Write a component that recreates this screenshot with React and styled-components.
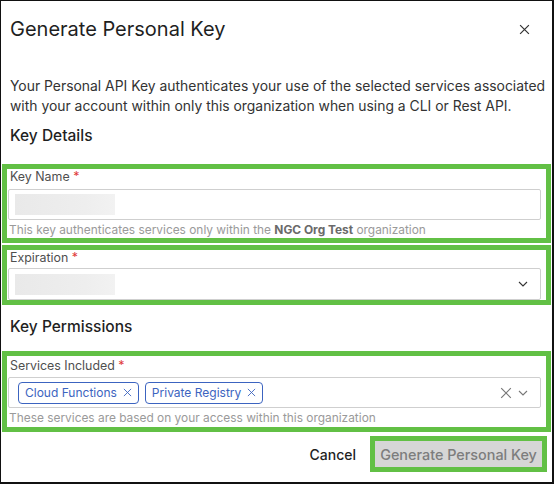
import React from 'react';
import styled, { createGlobalStyle } from 'styled-components';

const GlobalStyle = createGlobalStyle`
  html, body {
    margin: 0;
    padding: 0;
    background: #fff;
  }
  * {
    box-sizing: border-box;
  }
`;

// Styled Components
const Dialog = styled.div`
  width: 554px;
  height: 484px;
  border: 1px solid #111;
  border-right-width: 2px;
  border-bottom-width: 2px;
  background: #fff;
  font-family: Inter, "Noto Sans", sans-serif;
  color: #1a1a1a;
  display: flex;
  flex-direction: column;
`;

const Header = styled.div`
  display: flex;
  justify-content: space-between;
  align-items: center;
  padding: 14px 22px 0 9px;
  height: 42px;
`;

const Title = styled.h2`
  margin: 0;
  font-size: 20px;
  font-weight: 400;
  color: #1f1f1f;
`;

const CloseButton = styled.button`
  border: 0;
  background: none;
  padding: 0;
  display: flex;
  color: #333;
  cursor: pointer;
`;

const Body = styled.div`
  display: flex;
  flex-direction: column;
  padding: 33px 1px 0 1px;
`;

const Description = styled.p`
  margin: 0 0 0 8px;
  font-size: 13.9px;
  line-height: 20px;
  color: #333;
`;

const SectionTitle = styled.h3`
  margin: ${p => p.$top || 9}px 0 0 8px;
  font-size: 15.5px;
  font-weight: 500;
  line-height: 22px;
  color: #1f1f1f;
`;

const Highlight = styled.div`
  margin-top: ${p => p.$top || 0}px;
  border: 5px solid #62c045;
  padding: ${p => p.$pad || '1px 5px 1px 1px'};
  display: flex;
  flex-direction: column;
`;

const Label = styled.div`
  margin-left: 2px;
  font-size: 12.4px;
  line-height: 14px;
  color: #4f4f4f;
  font-weight: 400;

  span {
    color: #e03a3a;
  }
`;

const Field = styled.div`
  margin-top: ${p => p.$gap || 5}px;
  height: ${p => p.$h || 31}px;
  border: 1px solid #cfcfcf;
  border-radius: 2px;
  display: flex;
  align-items: center;
  padding: ${p => p.$pad || '0 12px 0 6px'};
  gap: 6px;
`;

const Redacted = styled.span`
  width: 100px;
  height: 21px;
  background: linear-gradient(90deg, #e9e9e9 0%, #eeeeee 70%, #f2f2f2 100%);
`;

const Spacer = styled.div`
  flex: 1;
`;

const Helper = styled.div`
  margin: 3px 0 0 1px;
  font-size: 11.9px;
  line-height: 14px;
  color: #9a9a9a;

  b {
    color: #6a6a6a;
    font-weight: 700;
  }
`;

const Chip = styled.span`
  display: inline-flex;
  align-items: center;
  gap: 6px;
  height: 22px;
  padding: 0 6px;
  border: 1px solid #3c64c0;
  border-radius: 4px;
  color: #3c64c0;
  font-size: 12px;
`;

const Icon = styled.span`
  display: inline-flex;
  color: ${p => p.$color || '#444'};
`;

const Footer = styled.div`
  display: flex;
  justify-content: flex-end;
  align-items: center;
  gap: 14px;
  padding: 4px 4px 0 0;
`;

const TextButton = styled.button`
  border: 0;
  background: none;
  font-family: inherit;
  font-size: 14px;
  color: #1f1f1f;
  font-weight: 500;
  padding: 0;
`;

const PrimaryOutline = styled.div`
  border: 5px solid #62c045;
`;

const PrimaryButton = styled.button`
  display: block;
  width: 167px;
  height: 26px;
  border: 0;
  background: #d6d6d6;
  color: #7d7d7d;
  font-family: inherit;
  font-size: 14.4px;
  font-weight: 500;
  padding: 0;
`;

const Cross = ({ size = 10, w = 1.2 }) => (
  <svg width={size} height={size} viewBox="0 0 10 10" fill="none">
    <path d="M1 1L9 9M9 1L1 9" stroke="currentColor" strokeWidth={w} />
  </svg>
);

const Chevron = () => (
  <svg width="10" height="6" viewBox="0 0 10 6" fill="none">
    <path d="M1 1L5 5L9 1" stroke="currentColor" strokeWidth="1.1" />
  </svg>
);

// Component
const App = () => {
  return (
    <>
      <GlobalStyle />
      <Dialog>
        <Header>
          <Title>Generate Personal Key</Title>
          <CloseButton><Cross size={11} w={1.1} /></CloseButton>
        </Header>
        <Body>
          <Description>
            Your Personal API Key authenticates your use of the selected services associated
            with your account within only this organization when using a CLI or Rest API.
          </Description>
          <SectionTitle>Key Details</SectionTitle>

          <Highlight $top={17}>
            <Label>Key Name <span>*</span></Label>
            <Field>
              <Redacted />
            </Field>
            <Helper>This key authenticates services only within the <b>NGC Org Test</b> organization</Helper>
          </Highlight>

          <Highlight $top={2} $pad="1px 5px 0 1px">
            <Label>Expiration <span>*</span></Label>
            <Field $h={32} $gap={3}>
              <Redacted />
              <Spacer />
              <Icon $color="#333"><Chevron /></Icon>
            </Field>
          </Highlight>

          <SectionTitle $top={11}>Key Permissions</SectionTitle>

          <Highlight $top={13} $pad="3px 5px 2px 1px">
            <Label>Services Included <span>*</span></Label>
            <Field $h={31} $gap={4} $pad="0 12px 0 9px">
              <Chip>Cloud Functions<Cross size={9} w={1} /></Chip>
              <Chip>Private Registry<Cross size={9} w={1} /></Chip>
              <Spacer />
              <Icon $color="#777"><Cross size={12} w={1} /></Icon>
              <Icon $color="#777"><Chevron /></Icon>
            </Field>
            <Helper>These services are based on your access within this organization</Helper>
          </Highlight>

          <Footer>
            <TextButton>Cancel</TextButton>
            <PrimaryOutline>
              <PrimaryButton>Generate Personal Key</PrimaryButton>
            </PrimaryOutline>
          </Footer>
        </Body>
      </Dialog>
    </>
  );
};

export default App;
